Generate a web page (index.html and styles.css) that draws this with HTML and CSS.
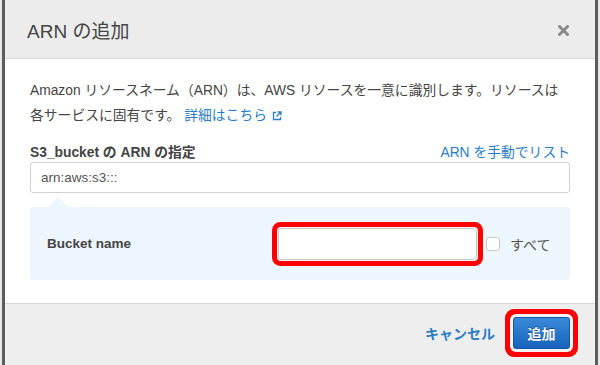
FILE: index.html
```html
<!DOCTYPE html>
<html lang="ja">
<head>
  <meta charset="UTF-8">
  <title>ARN の追加</title>
  <link rel="stylesheet" href="styles.css">
</head>
<body>
  <div class="frame">
    <div class="dialog">
      <div class="dialog-head">
        <h1 class="dialog-title">ARN の追加</h1>
        <svg class="close" width="11" height="11" viewBox="0 0 11 11">
          <path d="M1.5 1.5L9.5 9.5M9.5 1.5L1.5 9.5" stroke="#8a8a8a" stroke-width="3" stroke-linecap="round"/>
        </svg>
      </div>
      <div class="dialog-body">
        <p class="intro">Amazon リソースネーム（ARN）は、AWS リソースを一意に識別します。リソースは<br>各サービスに固有です。 <a href="#" class="link">詳細はこちら<svg class="ext" width="10" height="10" viewBox="0 0 10 10">
              <path d="M4 1.5H1.5v7h7V6" fill="none" stroke="#2a7cc7" stroke-width="1.3"/>
              <path d="M5.5 1H9v3.5M9 1L4.5 5.5" fill="none" stroke="#2a7cc7" stroke-width="1.3"/>
            </svg></a></p>
        <div class="field-head">
          <span class="field-label">S3_bucket の ARN の指定</span>
          <a href="#" class="link">ARN を手動でリスト</a>
        </div>
        <div class="text-input">arn:aws:s3:::</div>
        <div class="panel">
          <span class="panel-label">Bucket name</span>
          <span class="text-input bucket-input highlight"></span>
          <span class="check"></span>
          <span class="check-label">すべて</span>
        </div>
      </div>
      <div class="dialog-foot">
        <a href="#" class="cancel">キャンセル</a>
        <button class="primary highlight-btn">追加</button>
      </div>
    </div>
  </div>
</body>
</html>
```
FILE: styles.css
```css
html,
body {
  margin: 0;
  height: 100%;
}
body {
  background-color: #e8e8e8;
  font-family: "Liberation Sans", "Noto Sans CJK JP", sans-serif;
  color: #444;
}
.frame {
  height: 100%;
  padding: 0 2px;
  box-sizing: border-box;
}
.dialog {
  height: 100%;
  border-left: 3px solid #5c5c5c;
  border-right: 3px solid #5c5c5c;
  display: flex;
  flex-direction: column;
}
.dialog-head {
  height: 58px;
  background-color: #ececec;
  border-bottom: 1px solid #d8d8d8;
  display: flex;
  align-items: center;
  justify-content: space-between;
  padding: 0 26px 0 22px;
}
.dialog-title {
  margin: 0;
  font-size: 19px;
  font-weight: normal;
  color: #444;
}
.close {
  margin-top: 2px;
}
.dialog-body {
  background-color: #fff;
  padding: 19px 25px 0 25px;
  height: 245px;
  box-sizing: border-box;
  border-bottom: 1px solid #d6d6d6;
}
.intro {
  margin: 0;
  font-size: 13.8px;
  line-height: 25px;
  color: #444;
}
.link {
  color: #2a7cc7;
  text-decoration: none;
}
.ext {
  vertical-align: -1px;
  margin-left: 5px;
}
.field-head {
  display: flex;
  justify-content: space-between;
  align-items: center;
  margin-top: 13px;
  height: 19px;
  font-size: 13.8px;
}
.field-label {
  font-weight: bold;
  color: #444;
}
.text-input {
  display: block;
  margin-top: 2px;
  height: 31px;
  box-sizing: border-box;
  border: 1px solid #d2d2d2;
  border-radius: 3px;
  padding: 0 10px;
  font-size: 13.5px;
  line-height: 29px;
  color: #555;
  background-color: #fff;
}
.panel {
  position: relative;
  margin-top: 14px;
  height: 73px;
  background-color: #eef6fd;
  border-radius: 3px;
  display: flex;
  align-items: center;
  padding-left: 17px;
  font-size: 13.5px;
}
.panel::before {
  content: "";
  position: absolute;
  left: 18px;
  top: -10px;
  border-left: 10px solid transparent;
  border-right: 10px solid transparent;
  border-bottom: 10px solid #eef6fd;
}
.panel-label {
  width: 231px;
  font-weight: bold;
  color: #444;
}
.bucket-input {
  margin-top: 0;
  width: 199px;
  height: 32px;
  border-color: #c8c8c8;
}
.highlight {
  box-shadow: 0 0 0 1px #f6f6f6, 0 0 0 6px #f00;
  border-radius: 3px;
}
.check {
  width: 14px;
  height: 14px;
  margin-left: 9px;
  border: 1px solid #c8c8c8;
  border-radius: 3px;
  background-color: #fff;
  box-sizing: border-box;
}
.check-label {
  margin-left: 10px;
  color: #555;
  font-size: 14px;
}
.dialog-foot {
  flex: 1;
  background-color: #eeeeee;
  display: flex;
  align-items: center;
  justify-content: flex-end;
  padding: 0 25px 3px 0;
}
.cancel {
  color: #2a7cc7;
  font-weight: bold;
  font-size: 14px;
  text-decoration: none;
  margin-right: 18px;
}
.primary {
  width: 57px;
  height: 32px;
  border: 1px solid #1558a8;
  border-radius: 3px;
  background: linear-gradient(#3a8ad8, #1763bd);
  color: #fff;
  font-family: inherit;
  font-weight: bold;
  font-size: 14px;
  text-shadow: 0 -1px 0 #0d4a8f;
  padding: 0;
}
.highlight-btn {
  box-shadow: 0 0 0 3px #f4f4f4, 0 0 0 8px #f00;
}
```
